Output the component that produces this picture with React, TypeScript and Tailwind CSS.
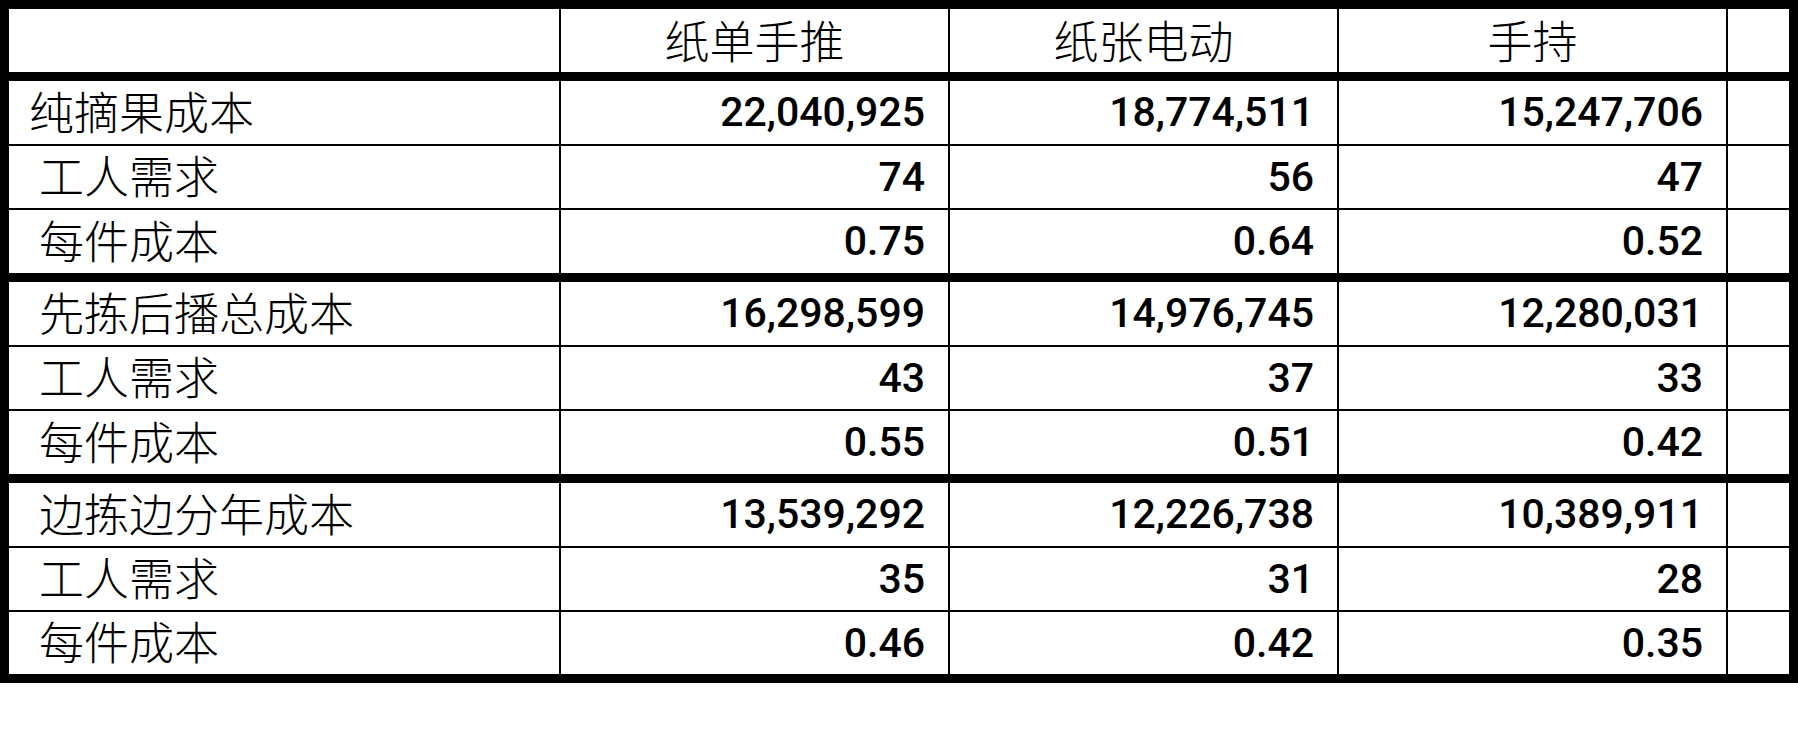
const cols = ["纸单手推", "纸张电动", "手持"];

type Row = { label: string; values: string[]; indent: "first" | "rest"; h: string };

const groups: Row[][] = [
  [
    { label: "纯摘果成本", values: ["22,040,925", "18,774,511", "15,247,706"], indent: "first", h: "h-[63px]" },
    { label: "工人需求", values: ["74", "56", "47"], indent: "rest", h: "h-[62px]" },
    { label: "每件成本", values: ["0.75", "0.64", "0.52"], indent: "rest", h: "h-[63px]" },
  ],
  [
    { label: "先拣后播总成本", values: ["16,298,599", "14,976,745", "12,280,031"], indent: "rest", h: "h-[63px]" },
    { label: "工人需求", values: ["43", "37", "33"], indent: "rest", h: "h-[62px]" },
    { label: "每件成本", values: ["0.55", "0.51", "0.42"], indent: "rest", h: "h-[63px]" },
  ],
  [
    { label: "边拣边分年成本", values: ["13,539,292", "12,226,738", "10,389,911"], indent: "rest", h: "h-[63px]" },
    { label: "工人需求", values: ["35", "31", "28"], indent: "rest", h: "h-[62px]" },
    { label: "每件成本", values: ["0.46", "0.42", "0.35"], indent: "rest", h: "h-[62px]" },
  ],
];

const cjk = "font-['Noto_Sans_CJK_SC','Noto_Sans',sans-serif] font-light";
const num = "font-['Roboto','Noto_Sans',sans-serif]";

function DataRow({ row, top }: { row: Row; top: boolean }) {
  return (
    <div className={`flex ${row.h} ${top ? "" : "border-t-2 border-black"} box-content`}>
      <div
        className={`w-[552px] shrink-0 border-r-2 border-black flex items-center pb-[5px] ${cjk} text-[45px] leading-none text-black ${
          row.indent === "first" ? "pl-[20px]" : "pl-[30px]"
        }`}
      >
        {row.label}
      </div>
      {row.values.map((v, i) => (
        <div
          key={i}
          className={`w-[389px] shrink-0 border-r-2 border-black flex items-center justify-end pr-[23px] ${num} text-[41px] font-medium leading-none text-black`}
        >
          {v}
        </div>
      ))}
      <div className="w-[61px] shrink-0" />
    </div>
  );
}

export default function App() {
  return (
    <div className="w-[1798px] h-[746px] bg-white">
      <div className="w-[1798px] border-[9px] border-black">
        <div className="flex h-[63px]">
          <div className="w-[552px] shrink-0 border-r-2 border-black" />
          {cols.map((c) => (
            <div
              key={c}
              className={`w-[389px] shrink-0 border-r-2 border-black flex items-center justify-center pb-[3px] ${cjk} text-[45px] leading-none text-black`}
            >
              {c}
            </div>
          ))}
          <div className="w-[61px] shrink-0" />
        </div>
        {groups.map((g, gi) => (
          <div key={gi} className="border-t-[9px] border-black">
            {g.map((r, ri) => (
              <DataRow key={ri} row={r} top={ri === 0} />
            ))}
          </div>
        ))}
      </div>
    </div>
  );
}
